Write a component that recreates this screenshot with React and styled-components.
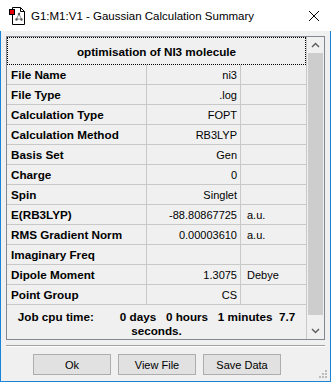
import styled, { createGlobalStyle } from "styled-components"


const GlobalStyle = createGlobalStyle`
    html, body {
        margin: 0;
        padding: 0;
        background: #ffffff;
    }
    body {
        font-family: "Liberation Sans", Arial, sans-serif;
    }
`

const StyledWindow = styled.div`
    width: 331px;
    height: 382px;
    display: flex;
    flex-direction: column;
    background: #ffffff;
    overflow: hidden;
`

const StyledTitleBar = styled.header`
    height: 31px;
    flex: none;
    display: flex;
    align-items: center;
    padding-left: 9px;
    background: #ffffff;
    font-size: 11.5px;
    color: #000;
`

const StyledTitle = styled.span`
    margin-left: 6px;
    flex: 1;
`

const StyledClose = styled.svg`
    width: 12px;
    height: 12px;
    margin-right: 11px;
`

const StyledClient = styled.main`
    flex: 1;
    display: flex;
    flex-direction: column;
    background: #f0f0f0;
    border: 1px solid #1883d7;
    border-top: none;
    padding: 5px 5px 0 5px;
`

const StyledPanel = styled.section`
    height: 304px;
    flex: none;
    box-sizing: border-box;
    border: 1px solid #828790;
    display: flex;
`

const StyledGrid = styled.div`
    width: 300px;
    box-sizing: border-box;
    border-right: 1px solid #c8c8c8;
    display: flex;
    flex-direction: column;
`

const StyledHeader = styled.div`
    height: 28px;
    box-sizing: border-box;
    border: 1px dotted #000;
    display: flex;
    align-items: center;
    justify-content: center;
    font-weight: bold;
    font-size: 11.7px;
`

const StyledRow = styled.div`
    height: 20px;
    box-sizing: border-box;
    border-bottom: 1px solid #c8c8c8;
    display: grid;
    grid-template-columns: 140px 94px 1fr;
`

const StyledCell = styled.div`
    display: flex;
    align-items: center;
    overflow: hidden;
    white-space: nowrap;
    font-size: ${p => (p.$bold ? "11.7px" : "11px")};
    font-weight: ${p => (p.$bold ? "bold" : "normal")};
    justify-content: ${p => (p.$right ? "flex-end" : "flex-start")};
    padding: ${p => (p.$right ? "0 3px 0 0" : p.$unit ? "0 0 0 6px" : "0 0 0 4px")};
    border-right: ${p => (p.$last ? "none" : "1px solid #c8c8c8")};
`

const StyledJob = styled.div`
    flex: 1;
    padding-top: 5px;
    white-space: pre;
    text-align: center;
    font-weight: bold;
    font-size: 11.7px;
    line-height: 14px;
`

const StyledScrollbar = styled.div`
    width: 17px;
    display: flex;
    flex-direction: column;
    align-items: center;
    background: #f0f0f0;
`

const StyledArrow = styled.svg`
    width: 17px;
    height: 16px;
    flex: none;
`

const StyledThumb = styled.div`
    width: 15px;
    height: 262px;
    background: #cdcdcd;
`

const StyledTrack = styled.div`
    flex: 1;
`

const StyledSeparator = styled.hr`
    margin: 5px 0 0 0;
    height: 0;
    border: none;
    border-top: 1px solid #a0a0a0;
    border-bottom: 1px solid #ffffff;
`

const StyledButtons = styled.div`
    display: flex;
    gap: 7px;
    padding-left: 27px;
    margin-top: 7px;
    position: relative;
    flex: 1;
`

const StyledButton = styled.button`
    width: 78px;
    height: 21px;
    box-sizing: border-box;
    border: 1px solid #adadad;
    background: #e1e1e1;
    font-family: "Liberation Sans", Arial, sans-serif;
    font-size: 11px;
    color: #000;
    padding: 0;
`

const StyledGrip = styled.svg`
    position: absolute;
    right: -3px;
    bottom: 2px;
    width: 11px;
    height: 11px;
`


const rows = [
    ["File Name", "ni3", ""],
    ["File Type", ".log", ""],
    ["Calculation Type", "FOPT", ""],
    ["Calculation Method", "RB3LYP", ""],
    ["Basis Set", "Gen", ""],
    ["Charge", "0", ""],
    ["Spin", "Singlet", ""],
    ["E(RB3LYP)", "-88.80867725", "a.u."],
    ["RMS Gradient Norm", "0.00003610", "a.u."],
    ["Imaginary Freq", "", ""],
    ["Dipole Moment", "1.3075", "Debye"],
    ["Point Group", "CS", ""],
]

function AppIcon(){
    return (
        <svg width="16" height="18" viewBox="0 0 16 18">
            <path d="M3.5 0.5 H11.5 L15.5 4.5 V17.5 H3.5 Z" fill="#fff" stroke="#000" />
            <path d="M11.5 0.5 V4.5 H15.5" fill="none" stroke="#000" />
            <path d="M10 7 L7.5 12 M10 7 L12.5 12 M7.5 12 H12.5" stroke="#8a8a8a" strokeWidth="1" fill="none" />
            <circle cx="10" cy="7" r="1.2" fill="#555" />
            <circle cx="7.5" cy="12.5" r="1.2" fill="#555" />
            <circle cx="12.5" cy="12.5" r="1.2" fill="#555" />
            <rect x="0.5" y="2.5" width="5" height="5" fill="#e8000b" stroke="#000" />
        </svg>
    )
}

export default function App(){
    return (
        <StyledWindow>
            <GlobalStyle />
            <StyledTitleBar>
                <AppIcon />
                <StyledTitle>G1:M1:V1 - Gaussian Calculation Summary</StyledTitle>
                <StyledClose viewBox="0 0 12 12">
                    <path d="M1 1 L11 11 M11 1 L1 11" stroke="#000" strokeWidth="1" />
                </StyledClose>
            </StyledTitleBar>
            <StyledClient>
                <StyledPanel>
                    <StyledGrid>
                        <StyledHeader>optimisation of NI3 molecule</StyledHeader>
                        {rows.map(([label, value, unit]) => (
                            <StyledRow key={label}>
                                <StyledCell $bold>{label}</StyledCell>
                                <StyledCell $right>{value}</StyledCell>
                                <StyledCell $unit $last>{unit}</StyledCell>
                            </StyledRow>
                        ))}
                        <StyledJob>{"Job cpu time:        0 days   0 hours   1 minutes  7.7\nseconds."}</StyledJob>
                    </StyledGrid>
                    <StyledScrollbar>
                        <StyledArrow viewBox="0 0 17 16">
                            <path d="M5 10 L8.5 6.5 L12 10" stroke="#606060" strokeWidth="1.5" fill="none" />
                        </StyledArrow>
                        <StyledThumb />
                        <StyledTrack />
                        <StyledArrow viewBox="0 0 17 16">
                            <path d="M5 6 L8.5 9.5 L12 6" stroke="#606060" strokeWidth="1.5" fill="none" />
                        </StyledArrow>
                    </StyledScrollbar>
                </StyledPanel>
                <StyledSeparator />
                <StyledButtons>
                    <StyledButton>Ok</StyledButton>
                    <StyledButton>View File</StyledButton>
                    <StyledButton>Save Data</StyledButton>
                    <StyledGrip viewBox="0 0 11 11">
                        <rect x="8" y="2" width="2" height="2" fill="#bcbcbc" />
                        <rect x="5" y="5" width="2" height="2" fill="#bcbcbc" />
                        <rect x="8" y="5" width="2" height="2" fill="#bcbcbc" />
                        <rect x="2" y="8" width="2" height="2" fill="#bcbcbc" />
                        <rect x="5" y="8" width="2" height="2" fill="#bcbcbc" />
                        <rect x="8" y="8" width="2" height="2" fill="#bcbcbc" />
                    </StyledGrip>
                </StyledButtons>
            </StyledClient>
        </StyledWindow>
    )
}
